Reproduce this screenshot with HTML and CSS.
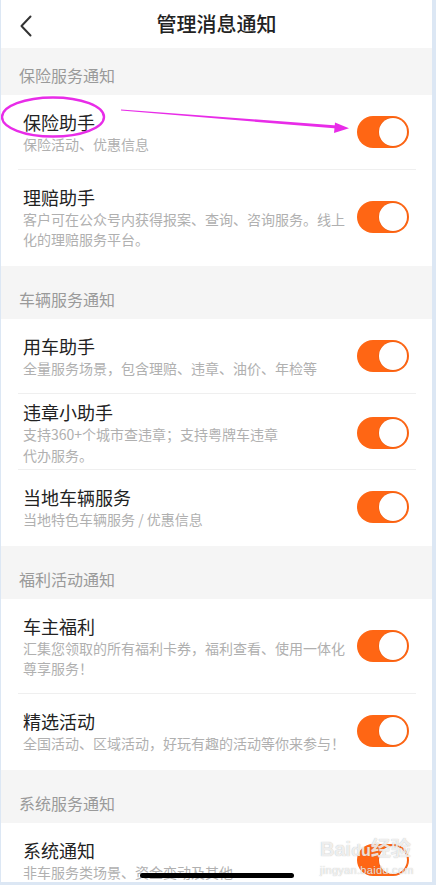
FILE: index.html
```html
<!DOCTYPE html>
<html lang="zh-CN">
<head>
<meta charset="utf-8">
<title>管理消息通知</title>
<link rel="stylesheet" href="styles.css">
</head>
<body>
<div class="screen">
  <header class="nav">
    <svg class="back" width="14" height="22" viewBox="0 0 14 22"><path d="M11.5 1.5 L2.5 11 L11.5 20.5" fill="none" stroke="#333" stroke-width="2" stroke-linecap="round" stroke-linejoin="round"/></svg>
    <h1 class="nav-title">管理消息通知</h1>
  </header>

  <section class="group first">
    <div class="group-title">保险服务通知</div>
    <div class="list">
      <div class="row"><div class="row-in">
        <div class="txt"><div class="t">保险助手</div><div class="s">保险活动、优惠信息</div></div>
        <span class="switch"><span class="knob"></span></span>
      </div></div>
      <div class="row"><div class="row-in">
        <div class="txt"><div class="t">理赔助手</div><div class="s">客户可在公众号内获得报案、查询、咨询服务。线上化的理赔服务平台。</div></div>
        <span class="switch"><span class="knob"></span></span>
      </div></div>
    </div>
  </section>

  <section class="group">
    <div class="group-title">车辆服务通知</div>
    <div class="list">
      <div class="row"><div class="row-in">
        <div class="txt"><div class="t">用车助手</div><div class="s">全量服务场景，包含理赔、违章、油价、年检等</div></div>
        <span class="switch"><span class="knob"></span></span>
      </div></div>
      <div class="row"><div class="row-in compact">
        <div class="txt"><div class="t">违章小助手</div><div class="s narrow">支持360+个城市查违章；支持粤牌车违章代办服务。</div></div>
        <span class="switch"><span class="knob"></span></span>
      </div></div>
      <div class="row"><div class="row-in">
        <div class="txt"><div class="t">当地车辆服务</div><div class="s">当地特色车辆服务 / 优惠信息</div></div>
        <span class="switch"><span class="knob"></span></span>
      </div></div>
    </div>
  </section>

  <section class="group">
    <div class="group-title">福利活动通知</div>
    <div class="list">
      <div class="row"><div class="row-in">
        <div class="txt"><div class="t">车主福利</div><div class="s">汇集您领取的所有福利卡券，福利查看、使用一体化尊享服务！</div></div>
        <span class="switch"><span class="knob"></span></span>
      </div></div>
      <div class="row"><div class="row-in">
        <div class="txt"><div class="t">精选活动</div><div class="s">全国活动、区域活动，好玩有趣的活动等你来参与！</div></div>
        <span class="switch"><span class="knob"></span></span>
      </div></div>
    </div>
  </section>

  <section class="group">
    <div class="group-title">系统服务通知</div>
    <div class="list">
      <div class="row"><div class="row-in">
        <div class="txt"><div class="t">系统通知</div><div class="s">非车服务类场景、资金变动及其他</div></div>
        <span class="switch"><span class="knob"></span></span>
      </div></div>
    </div>
  </section>

  <svg class="annot" width="436" height="150" viewBox="0 0 436 150">
    <ellipse cx="53" cy="117" rx="51" ry="19.5" fill="none" stroke="#e82ce8" stroke-width="2.4"/>
    <polygon points="121,109.4 337,125.4 337,128.6 121,110.6" fill="#e82ce8"/>
    <polygon points="335,122.5 349,128.3 334,133" fill="#e82ce8"/>
  </svg>

  <div class="watermark">
    <div class="wm-main">Bai<span class="wm-du">du</span>经验</div>
    <div class="wm-url">jingyan.baidu.com</div>
  </div>

  <div class="home-bar"></div>
</div>
</body>
</html>
```

FILE: styles.css
```css
html, body {
  margin: 0;
  padding: 0;
}
body {
  background: #dce7f4;
  font-family: "Noto Sans CJK SC", "Noto Sans", sans-serif;
}
.screen {
  position: relative;
  width: 431px;
  height: 882px;
  margin-left: 1px;
  background: #f5f5f5;
  overflow: hidden;
}
.nav {
  height: 48px;
  background: #fff;
  display: flex;
  align-items: center;
  justify-content: center;
  position: relative;
}
.back {
  position: absolute;
  left: 18px;
  top: 15px;
}
.nav-title {
  margin: 0;
  font-size: 20px;
  font-weight: 500;
  color: #222;
  line-height: 48px;
}
.group {
  margin-top: 6px;
}
.group.first {
  margin-top: 0;
}
.group-title {
  padding: 16px 18px 9px;
  font-size: 16px;
  line-height: 22px;
  color: #9a9a9a;
}
.list {
  background: #fff;
}
.row {
  padding: 0 16px 0 17px;
}
.row-in {
  display: flex;
  align-items: center;
  padding: 15px 7px 15px 5px;
  border-bottom: 1px solid #efefef;
}
.row-in.compact {
  padding-top: 6px;
  padding-bottom: 3px;
}
.row:last-child .row-in {
  border-bottom: none;
  padding-bottom: 17px;
}
.txt {
  flex: 1;
  min-width: 0;
  padding-right: 8px;
}
.t {
  font-size: 18px;
  line-height: 24px;
  color: #222;
}
.s {
  font-size: 14px;
  line-height: 20px;
  color: #b0b0b0;
}
.s.narrow {
  max-width: 268px;
  line-height: 21px;
}
.switch {
  flex: none;
  width: 52px;
  height: 32px;
  border-radius: 16px;
  background: #ff6614;
  position: relative;
}
.knob {
  position: absolute;
  right: 2px;
  top: 2px;
  width: 28px;
  height: 28px;
  border-radius: 50%;
  background: #fff;
  box-shadow: 0 0 0 0.5px rgba(200, 70, 0, 0.4);
}
.annot {
  position: absolute;
  left: -1px;
  top: 0;
  pointer-events: none;
}
.watermark {
  position: absolute;
  left: 319px;
  top: 836px;
  color: rgba(255, 255, 255, 0.8);
  text-shadow: 0 0 1px rgba(120, 120, 120, 0.6);
  font-family: "Liberation Sans", "Noto Sans CJK SC", sans-serif;
  pointer-events: none;
}
.wm-main {
  font-size: 20px;
  font-weight: 700;
  line-height: 26px;
}
.wm-du {
  font-size: 16px;
}
.wm-url {
  font-size: 11px;
  line-height: 13px;
  letter-spacing: 0.3px;
}
.home-bar {
  position: absolute;
  left: 139px;
  bottom: 4px;
  width: 154px;
  height: 5px;
  border-radius: 3px;
  background: #000;
}
```
